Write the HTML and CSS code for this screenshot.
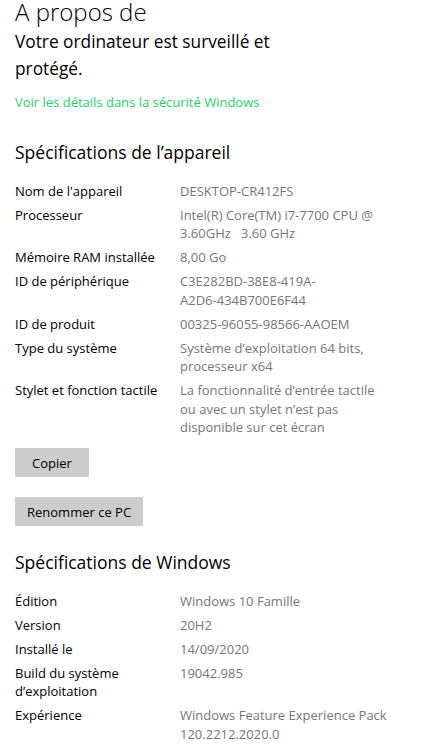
FILE: index.html
```html
<!DOCTYPE html>
<html lang="fr">
<head>
<title>À propos de</title>
<meta charset="UTF-8">
<meta name="viewport" content="width=device-width, initial-scale=1.0">
<link rel="stylesheet" href="styles.css">
</head>
<body>

<div class="page">
  <h1 class="title">A propos de</h1>
  <p class="status">Votre ordinateur est surveillé et<br>protégé.</p>
  <a class="link" href="#">Voir les détails dans la sécurité Windows</a>

  <h2 class="section-title">Spécifications de l’appareil</h2>
  <div class="specs">
    <span class="label">Nom de l'appareil</span>
    <span class="value">DESKTOP-CR412FS</span>
    <span class="label">Processeur</span>
    <span class="value">Intel(R) Core(TM) i7-7700 CPU @<br>3.60GHz&nbsp;&nbsp;&nbsp;3.60 GHz</span>
    <span class="label">Mémoire RAM installée</span>
    <span class="value">8,00 Go</span>
    <span class="label">ID de périphérique</span>
    <span class="value">C3E282BD-38E8-419A-<br>A2D6-434B700E6F44</span>
    <span class="label">ID de produit</span>
    <span class="value">00325-96055-98566-AAOEM</span>
    <span class="label">Type du système</span>
    <span class="value">Système d’exploitation 64 bits,<br>processeur x64</span>
    <span class="label">Stylet et fonction tactile</span>
    <span class="value">La fonctionnalité d’entrée tactile<br>ou avec un stylet n’est pas<br>disponible sur cet écran</span>
  </div>

  <div class="actions">
    <button class="btn">Copier</button>
    <button class="btn">Renommer ce PC</button>
  </div>

  <h2 class="section-title section-title-win">Spécifications de Windows</h2>
  <div class="specs">
    <span class="label">Édition</span>
    <span class="value">Windows 10 Famille</span>
    <span class="label">Version</span>
    <span class="value">20H2</span>
    <span class="label">Installé le</span>
    <span class="value">14/09/2020</span>
    <span class="label">Build du système<br>d’exploitation</span>
    <span class="value">19042.985</span>
    <span class="label">Expérience</span>
    <span class="value">Windows Feature Experience Pack<br>120.2212.2020.0</span>
  </div>
</div>

</body>
</html>
```

FILE: styles.css
```css
body {
  margin: 0;
  background: #fff;
  font-family: "Segoe UI", "Open Sans", sans-serif;
  color: #000;
}

.page {
  padding: 0 15px;
}

.title {
  margin: 0;
  font-size: 24px;
  font-weight: 300;
  line-height: 24px;
}

.status {
  margin: 4px 0 0;
  font-size: 17.3px;
  font-weight: 400;
  line-height: 27px;
}

.link {
  display: block;
  margin-top: 10.5px;
  font-size: 13px;
  line-height: 19px;
  color: #1fd16c;
  text-decoration: none;
}

.section-title {
  margin: 28px 0 18px;
  font-size: 17.5px;
  font-weight: 400;
  line-height: 24px;
}

.section-title-win {
  margin-top: 23.5px;
}

.specs {
  display: grid;
  grid-template-columns: 165px 1fr;
  row-gap: 5.5px;
  font-size: 13px;
  line-height: 18.5px;
}

.label {
  color: #000;
}

.value {
  color: #767676;
}

.actions {
  display: flex;
  flex-direction: column;
  align-items: flex-start;
  gap: 20px;
  margin-top: 11.5px;
}

.btn {
  height: 29px;
  min-width: 74px;
  padding: 0 12px;
  border: none;
  background: #cccccc;
  font-family: inherit;
  font-size: 13px;
  color: #000;
}
```
